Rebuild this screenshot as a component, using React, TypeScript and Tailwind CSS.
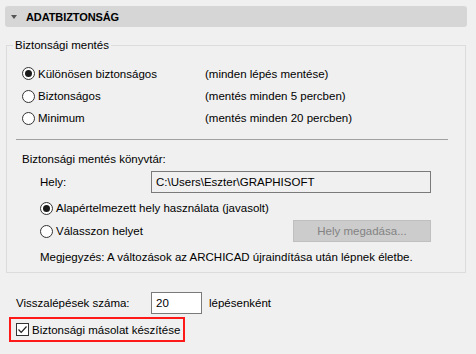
import { useState } from "react";

const font = { fontFamily: '"Segoe UI", "Liberation Sans", Arial, sans-serif' };

const Radio = ({ checked }: { checked?: boolean }) => (
    <span className="w-[13px] h-[13px] rounded-full border border-[#333] bg-white flex items-center justify-center flex-shrink-0">
        {checked && <span className="w-[7px] h-[7px] rounded-full bg-[#1a1a1a]" />}
    </span>
);

const RadioRow = ({ label, checked, className = "" }: { label: string; checked?: boolean; className?: string }) => (
    <div className={`flex items-center gap-[3px] whitespace-nowrap ${className}`}>
        <Radio checked={checked} />
        <span>{label}</span>
    </div>
);

const App = () => {
    const [backup, setBackup] = useState(true);

    return (
        <div className="w-[476px] h-[354px] bg-[#f0f0f0] pt-[6px] px-[5px] text-[11.5px] leading-[16px] text-black" style={font}>

            {/* Section header */}
            <div className="h-[21px] w-[462px] rounded-[3px] bg-[#d6d6d6] flex items-center pl-[6px] gap-[9px]">
                <svg width="6" height="4" viewBox="0 0 6 4">
                    <path d="M0 0 L6 0 L3 4 Z" fill="#555" />
                </svg>
                <span className="font-bold text-[11px] tracking-[-0.1px]">ADATBIZTONSÁG</span>
            </div>

            {/* Backup group */}
            <fieldset className="mt-[10px] ml-[1px] w-[460px] border border-[#dcdcdc] pb-[7px]">
                <legend className="ml-[6px] px-[2px]">Biztonsági mentés</legend>

                <div className="pl-[15px] mt-[9px]">
                    <div className="flex items-center h-[23px]">
                        <RadioRow label="Különösen biztonságos" checked className="w-[183px]" />
                        <span>(minden lépés mentése)</span>
                    </div>
                    <div className="flex items-center h-[22px]">
                        <RadioRow label="Biztonságos" className="w-[183px]" />
                        <span>(mentés minden 5 percben)</span>
                    </div>
                    <div className="flex items-center h-[22px]">
                        <RadioRow label="Minimum" className="w-[183px]" />
                        <span>(mentés minden 20 percben)</span>
                    </div>
                </div>

                <div className="mt-[10px] ml-[9px] w-[432px] h-px bg-[#a0a0a0]" />

                <div className="pl-[15px] mt-[11px]">
                    <div className="h-[16px]">Biztonsági mentés könyvtár:</div>

                    <div className="pl-[18px]">
                        <div className="mt-[4px] h-[22px] flex items-center">
                            <span className="w-[111px]">Hely:</span>
                            <div className="w-[280px] h-[22px] border border-[#7a7a7a] bg-[#f0f0f0] flex items-center px-[4px]">
                                C:\Users\Eszter\GRAPHISOFT
                            </div>
                        </div>

                        <RadioRow label="Alapértelmezett hely használata (javasolt)" checked className="mt-[4px] h-[22px]" />

                        <div className="mt-[1px] h-[22px] flex items-center justify-between w-[391px]">
                            <RadioRow label="Válasszon helyet" />
                            <button className="w-[138px] h-[22px] bg-[#cccccc] border border-[#bfbfbf] text-[#838383]">
                                Hely megadása...
                            </button>
                        </div>

                        <div className="mt-[7px] h-[16px] whitespace-nowrap">
                            Megjegyzés: A változások az ARCHICAD újraindítása után lépnek életbe.
                        </div>
                    </div>
                </div>
            </fieldset>

            {/* Undo steps */}
            <div className="mt-[19px] ml-[11px] h-[22px] flex items-center">
                <span className="w-[135px]">Visszalépések száma:</span>
                <div className="w-[51px] h-[22px] border border-[#7a7a7a] bg-white flex items-center px-[4px]">20</div>
                <span className="ml-[7px]">lépésenként</span>
            </div>

            {/* Backup copy checkbox */}
            <div className="mt-[3px] ml-[4px] w-[176px] h-[25px] border-2 border-[#ff1a1a] flex items-center pl-[5px] gap-[3px] whitespace-nowrap">
                <button
                    onClick={() => setBackup(!backup)}
                    className="w-[13px] h-[13px] border border-[#333] bg-white flex items-center justify-center flex-shrink-0"
                >
                    {backup && (
                        <svg width="11" height="11" viewBox="0 0 11 11">
                            <path d="M1.5 5.5 L4.2 8.3 L9.5 2.5" fill="none" stroke="#222" strokeWidth="1.2" />
                        </svg>
                    )}
                </button>
                <span>Biztonsági másolat készítése</span>
            </div>
        </div>
    );
};

export default App;
